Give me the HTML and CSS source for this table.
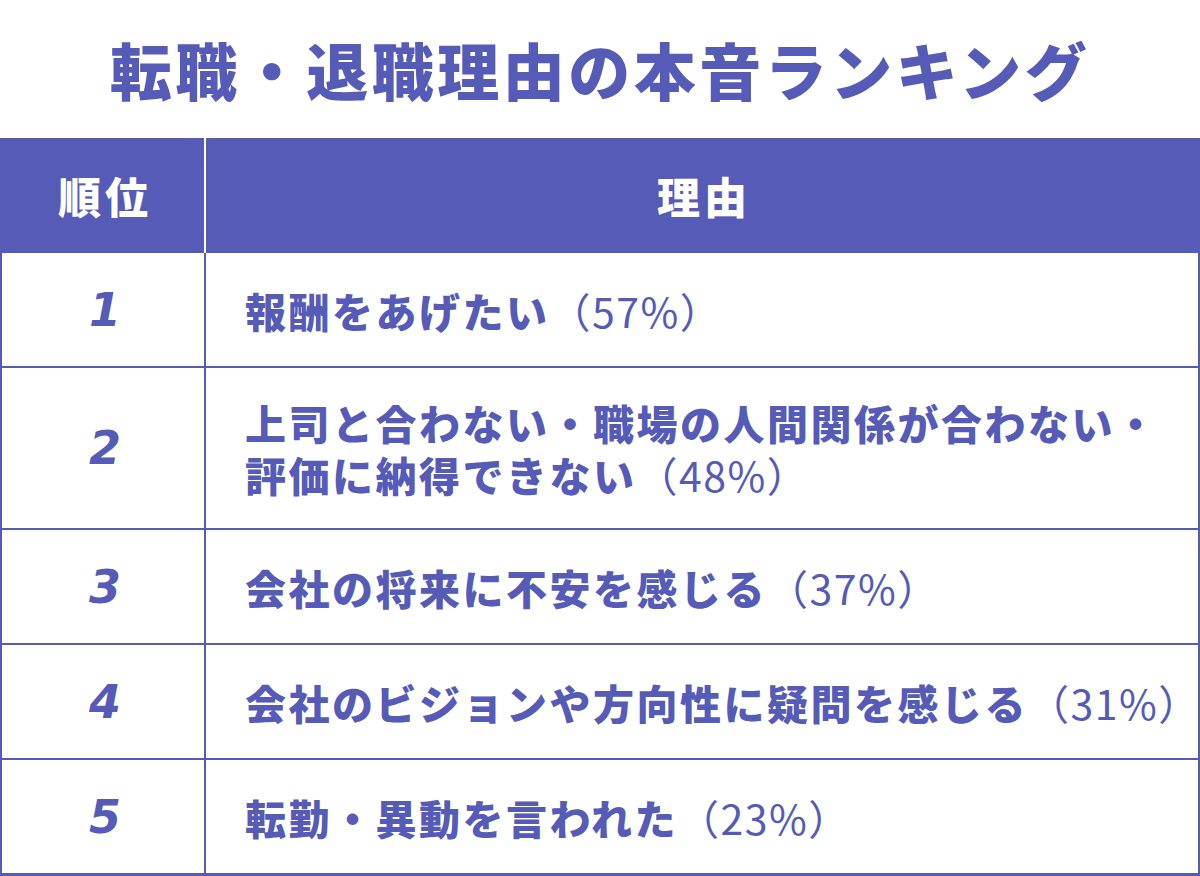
FILE: index.html
```html
<!DOCTYPE html>
<html lang="ja">
<head>
<meta charset="utf-8">
<title>転職・退職理由の本音ランキング</title>
<link rel="stylesheet" href="styles.css">
</head>
<body>
<h1 class="title">転職・退職理由の本音ランキング</h1>
<div class="table">
  <div class="row head">
    <div class="rank">順位</div>
    <div class="reason">理由</div>
  </div>
  <div class="row">
    <div class="rank">1</div>
    <div class="reason">報酬をあげたい<span class="pct">（57%）</span></div>
  </div>
  <div class="row tall">
    <div class="rank">2</div>
    <div class="reason">上司と合わない・職場の人間関係が合わない・<br>評価に納得できない<span class="pct">（48%）</span></div>
  </div>
  <div class="row">
    <div class="rank">3</div>
    <div class="reason">会社の将来に不安を感じる<span class="pct">（37%）</span></div>
  </div>
  <div class="row">
    <div class="rank">4</div>
    <div class="reason">会社のビジョンや方向性に疑問を感じる<span class="pct">（31%）</span></div>
  </div>
  <div class="row last">
    <div class="rank">5</div>
    <div class="reason">転勤・異動を言われた<span class="pct">（23%）</span></div>
  </div>
</div>
</body>
</html>
```
FILE: styles.css
```css
* { box-sizing: border-box; }
html, body { margin: 0; padding: 0; background: #ffffff; }
body {
  width: 1200px;
  height: 876px;
  overflow: hidden;
  font-family: "Noto Sans CJK JP", "Noto Sans", sans-serif;
  color: #565bb7;
}
.title {
  margin: 0;
  height: 138px;
  display: flex;
  align-items: center;
  justify-content: center;
  font-size: 62px;
  font-weight: 900;
  letter-spacing: 3.5px;
  color: #565bb7;
  padding-left: 0;
}
.table {
  width: 1200px;
  border-left: 2px solid #565bb7;
  border-right: 2px solid #565bb7;
}
.row {
  display: grid;
  grid-template-columns: 204px 1fr;
  height: 115px;
  border-bottom: 2px solid #565bb7;
}
.row.tall { height: 162px; }
.row.last { height: 116px; border-bottom-width: 3px; }
.rank {
  border-right: 2px solid #565bb7;
  display: flex;
  align-items: center;
  justify-content: center;
  padding-left: 4px;
  font-family: "DejaVu Sans", sans-serif;
  font-weight: 700;
  font-style: italic;
  font-size: 46px;
}
.reason {
  padding-left: 39px;
  font-size: 41px;
  font-weight: 900;
  letter-spacing: 2.5px;
  line-height: 52px;
  white-space: nowrap;
  align-self: center;
}
.pct {
  font-weight: 400;
  letter-spacing: 1.5px;
}
.row.head {
  background: #565bb7;
  border-bottom: none;
  color: #ffffff;
}
.head .rank,
.head .reason {
  font-family: "Noto Sans CJK JP", sans-serif;
  font-style: normal;
  font-size: 43px;
  font-weight: 900;
  letter-spacing: 4px;
  line-height: 1;
  display: flex;
  align-items: center;
  justify-content: center;
  align-self: stretch;
  padding-left: 4px;
}
.head .rank { border-right: 2px solid #ffffff; }
```
